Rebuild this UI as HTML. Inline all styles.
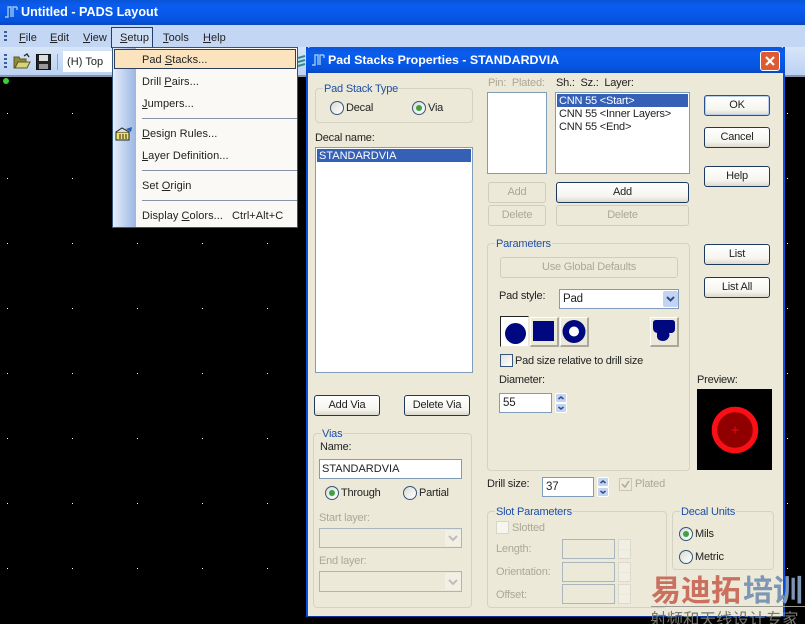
<!DOCTYPE html>
<html><head><meta charset="utf-8"><style>
html,body{margin:0;padding:0}
#r{position:relative;width:805px;height:624px;overflow:hidden;background:#000;font:11px/16px "Liberation Sans","Noto Sans CJK SC",sans-serif;color:#222;letter-spacing:-.2px}
#r div,#r span,#r svg{position:absolute;box-sizing:border-box}
#r span{white-space:nowrap}
u{text-decoration:underline}
.d{color:#aca899}
.g{border:1px solid #d4d2c2;border-radius:4px}
.gt{background:#ece9d8;padding:0 1px}
.btn{border:1px solid #1c3a5e;border-radius:3px;background:linear-gradient(#fff,#f6f5ef 70%,#dcd9cc);text-align:center;line-height:19px}
.dis{border:1px solid #cfcdc0;border-radius:3px;background:#ece9d8;text-align:center;line-height:19px;color:#aca899}
.in{background:#fff;border:1px solid #7f9db9;padding-left:3px;line-height:17px;font-size:11.5px}
.indis{background:#ece9d8;border:1px solid #a9b6bd}
.radio{width:14px;height:14px;border-radius:50%;border:1px solid #33567a;background:linear-gradient(135deg,#dcdcd4,#fff)}
.radio.on:after{content:"";position:absolute;left:3px;top:3px;width:6px;height:6px;border-radius:50%;background:#3fa045}
.m{letter-spacing:.05px}
.up{letter-spacing:0}
.spin{width:12px;background:#c5d5f0;border:1px solid #fff;border-radius:2px}
.tb{background:#ece9d8;border:1px solid;border-color:#fff #aca899 #aca899 #fff;border-width:1px 2px 2px 1px}
.ds{width:13px;height:20px;background:repeating-linear-gradient(#f1efe4 0 9px,#ece9d8 9px 10px);border:1px solid #dcdacd}
</style></head><body><div id="r">
<svg style="left:0;top:0" width="805" height="624"><defs><pattern id="p" x="7" y="48" width="65" height="65" patternUnits="userSpaceOnUse"><rect width="1" height="1" fill="#fff"/></pattern></defs><rect y="76" width="805" height="548" fill="url(#p)"/><circle cx="6" cy="81" r="3" fill="#35d335"/></svg>

<div style="left:0;top:0;width:805px;height:25px;background:linear-gradient(#0a55d8,#0a5df0 25%,#0554e0 80%,#0a46bd)"></div>
<svg style="left:4px;top:4px" width="16" height="15" fill="none" stroke="#9cc6ee" stroke-width="1.4"><path d="M1 13h3V3h3v10M9 13V3h4M13 3v3"/></svg>
<span style="left:21px;top:4px;color:#fff;font:bold 12.6px/16px 'Liberation Sans',sans-serif;letter-spacing:0">Untitled - PADS Layout</span>

<div style="left:0;top:25px;width:805px;height:22px;background:#c3d7f4"></div>
<div style="left:0;top:47px;width:805px;height:28px;background:linear-gradient(#d8e5f9,#bcd2f2)"></div>
<div style="left:0;top:75px;width:805px;height:2px;background:#8a94a8"></div>
<div style="left:4px;top:31px;width:3px;height:11px;background:repeating-linear-gradient(#3a5f9a 0 2px,transparent 2px 4px)"></div>
<div style="left:4px;top:54px;width:3px;height:14px;background:repeating-linear-gradient(#3a5f9a 0 2px,transparent 2px 4px)"></div>
<span class="m" style="left:19px;top:30px"><u>F</u>ile</span>
<span class="m" style="left:50px;top:30px"><u>E</u>dit</span>
<span class="m" style="left:83px;top:30px"><u>V</u>iew</span>
<div style="left:111px;top:27px;width:42px;height:21px;background:#cfe0f6;border:1px solid #1f3f6e;border-bottom:0"></div>
<span class="m" style="left:120px;top:30px"><u>S</u>etup</span>
<span class="m" style="left:163px;top:30px"><u>T</u>ools</span>
<span class="m" style="left:203px;top:30px"><u>H</u>elp</span>

<svg style="left:13px;top:53px" width="18" height="17"><path d="M1 4h5l1 2h6v3H5L2 15H1z" fill="#8f8a3c" stroke="#5c5a20"/><path d="M2 15l3-6h12l-3 6z" fill="#d8d27a" stroke="#5c5a20"/><path d="M11 3l3-2 2 3" fill="none" stroke="#222" stroke-width="1.2"/></svg>
<svg style="left:36px;top:54px" width="15" height="16"><rect x=".5" y=".5" width="14" height="15" fill="#222" stroke="#111"/><rect x="3" y="1" width="9" height="6" fill="#ddd"/><rect x="3" y="10" width="9" height="5" fill="#999"/></svg>
<div style="left:57px;top:54px;width:1px;height:16px;background:#8ea4c4"></div>
<div style="left:63px;top:51px;width:50px;height:21px;background:#fff"></div>
<span class="m" style="left:67px;top:54px;font-size:11px">(H) Top</span>

<div style="left:112px;top:47px;width:186px;height:181px;background:#faf9f5;border:1px solid #35557f"></div>
<div style="left:113px;top:48px;width:23px;height:179px;background:linear-gradient(90deg,#e4edfb,#9bb7e2)"></div>
<div style="left:114px;top:49px;width:182px;height:20px;background:#fbe3bd;border:1px solid #2c3f5c"></div>
<span class="m" style="left:142px;top:52px">Pad <u>S</u>tacks...</span>
<span class="m" style="left:142px;top:74px">Drill <u>P</u>airs...</span>
<span class="m" style="left:142px;top:96px"><u>J</u>umpers...</span>
<div style="left:142px;top:118px;width:155px;height:1px;background:#8a94a8"></div>
<svg style="left:115px;top:126px" width="18" height="15"><path d="M1 6h13v8H1z" fill="#f3e36a" stroke="#222"/><path d="M1 6l6-4 7 4" fill="#ddd" stroke="#222"/><path d="M5 8v5M8 8v5M11 8v5" stroke="#222"/><path d="M11 3l6-2-1 5" fill="#2b5db5"/></svg>
<span class="m" style="left:142px;top:126px"><u>D</u>esign Rules...</span>
<span class="m" style="left:142px;top:148px"><u>L</u>ayer Definition...</span>
<div style="left:142px;top:170px;width:155px;height:1px;background:#8a94a8"></div>
<span class="m" style="left:142px;top:178px">Set <u>O</u>rigin</span>
<div style="left:142px;top:200px;width:155px;height:1px;background:#8a94a8"></div>
<span class="m" style="left:142px;top:208px">Display <u>C</u>olors...</span>
<span class="m" style="left:232px;top:208px">Ctrl+Alt+C</span>

<svg style="left:298px;top:55px" width="8" height="14"><path d="M0 3l7-2M0 7l7-2M0 11l7-2" stroke="#2e8a8a" stroke-width="2"/></svg>

<div style="left:306px;top:47px;width:479px;height:570px;background:#ece9d8;border:2px solid #0d50d8;border-top:0;border-bottom:1px solid #0a3a9a"></div>
<div style="left:306px;top:47px;width:479px;height:26px;background:linear-gradient(#0a55d8,#0a5df0 25%,#0554e0 80%,#0a46bd);border-radius:5px 5px 0 0"></div>
<svg style="left:311px;top:52px" width="16" height="15" fill="none" stroke="#9cc6ee" stroke-width="1.4"><path d="M1 13h3V3h3v10M9 13V3h4M13 3v3"/></svg>
<span style="left:328px;top:53px;color:#fff;font:bold 12.4px/15px 'Liberation Sans',sans-serif;letter-spacing:0">Pad Stacks Properties - STANDARDVIA</span>
<div style="left:760px;top:51px;width:20px;height:20px;background:#dd5a32;border:1px solid #fff;border-radius:3px"></div>
<svg style="left:760px;top:51px" width="20" height="20"><path d="M6 6l8 8M14 6l-8 8" stroke="#fff" stroke-width="2.2"/></svg>

<div class="g" style="left:315px;top:88px;width:158px;height:35px"></div>
<span class="gt" style="left:323px;top:81px;color:#1d4fa8">Pad Stack Type</span>
<div class="radio" style="left:330px;top:101px"></div><span style="left:346px;top:100px">Decal</span>
<div class="radio on" style="left:412px;top:101px"></div><span style="left:428px;top:100px">Via</span>
<span style="left:315px;top:130px">Decal name:</span>
<div style="left:315px;top:147px;width:158px;height:226px;background:#fff;border:1px solid #7f9db9"></div>
<div style="left:317px;top:149px;width:154px;height:13px;background:#3560b5"></div>
<span class="up" style="left:319px;top:149px;color:#fff;line-height:14px">STANDARDVIA</span>

<span class="d" style="left:488px;top:75px">Pin:&nbsp; Plated:</span>
<span style="left:556px;top:75px">Sh.:&nbsp; Sz.:&nbsp; Layer:</span>
<div style="left:487px;top:92px;width:60px;height:82px;background:#fff;border:1px solid #7f9db9"></div>
<div style="left:555px;top:92px;width:135px;height:82px;background:#fff;border:1px solid #7f9db9"></div>
<div style="left:557px;top:94px;width:131px;height:13px;background:#3560b5"></div>
<span style="left:559px;top:94px;color:#fff;line-height:14px">CNN 55 &lt;Start&gt;</span>
<span style="left:559px;top:107px;line-height:14px">CNN 55 &lt;Inner Layers&gt;</span>
<span style="left:559px;top:120px;line-height:14px">CNN 55 &lt;End&gt;</span>

<div class="dis" style="left:488px;top:182px;width:58px;height:21px">Add</div>
<div class="dis" style="left:488px;top:205px;width:58px;height:21px">Delete</div>
<div class="btn" style="left:556px;top:182px;width:133px;height:21px">Add</div>
<div class="dis" style="left:556px;top:205px;width:133px;height:21px">Delete</div>

<div class="btn" style="left:704px;top:95px;width:66px;height:21px;border-color:#27528f;box-shadow:inset 0 0 0 1px #b9cdec">OK</div>
<div class="btn" style="left:704px;top:127px;width:66px;height:21px">Cancel</div>
<div class="btn" style="left:704px;top:166px;width:66px;height:21px">Help</div>
<div class="btn" style="left:704px;top:244px;width:66px;height:21px">List</div>
<div class="btn" style="left:704px;top:277px;width:66px;height:21px">List All</div>

<div class="g" style="left:487px;top:243px;width:203px;height:228px"></div>
<span class="gt" style="left:495px;top:236px;color:#1d4fa8">Parameters</span>
<div class="dis" style="left:500px;top:257px;width:178px;height:21px">Use Global Defaults</div>
<span style="left:499px;top:288px">Pad style:</span>
<div class="in" style="left:559px;top:289px;width:120px;height:20px;padding-top:1px">Pad</div>
<div style="left:663px;top:291px;width:15px;height:16px;background:#c3d3f2;border-radius:2px"></div>
<svg style="left:663px;top:291px" width="15" height="16"><path d="M4 6l3.500 3.500L11 6" fill="none" stroke="#2d4f8c" stroke-width="2"/></svg>

<div style="left:500px;top:316px;width:29px;height:31px;background:#fff;border:1px solid;border-color:#222 #ece9d8 #ece9d8 #222"></div>
<div class="tb" style="left:530px;top:317px;width:29px;height:30px"></div>
<div class="tb" style="left:560px;top:317px;width:29px;height:30px"></div>
<div class="tb" style="left:650px;top:317px;width:29px;height:30px"></div>
<svg style="left:500px;top:316px" width="180" height="31"><circle cx="15.500" cy="17.500" r="10.500" fill="#00087f"/><rect x="33" y="5" width="21" height="20" fill="#00087f"/><circle cx="74" cy="15.500" r="11.500" fill="#00087f"/><circle cx="74" cy="15.500" r="5" fill="#fff"/><path d="M153 7q0-3 3-3h16q3 0 3 3v6q0 3-3 4h-3q1 2 0 4-2 4-6 4-5 0-6-4v-4q-4-1-4-5z" fill="#00087f"/></svg>
<div style="left:500px;top:354px;width:13px;height:13px;background:linear-gradient(135deg,#e4e2d8,#fff);border:1px solid #33567a"></div>
<span style="left:515px;top:353px;letter-spacing:-.25px">Pad size relative to drill size</span>
<span style="left:499px;top:372px">Diameter:</span>
<div class="in" style="left:499px;top:393px;width:53px;height:20px;padding-top:1px">55</div>
<div class="spin" style="left:555px;top:393px;height:10px"></div>
<div class="spin" style="left:555px;top:403px;height:10px"></div>
<svg style="left:555px;top:393px" width="12" height="20"><path d="M3.500 6l2.500-2 2.500 2M3.500 14l2.500 2 2.500-2" fill="none" stroke="#2d4f8c" stroke-width="1.500"/></svg>

<span style="left:697px;top:372px">Preview:</span>
<div style="left:697px;top:389px;width:75px;height:81px;background:#000"></div>
<svg style="left:697px;top:389px" width="75" height="81"><circle cx="38" cy="41" r="20.500" fill="#900000" stroke="#fa0f16" stroke-width="5.500"/><path d="M34.500 41h7M38 37.500v7" stroke="#e01018"/></svg>

<span style="left:487px;top:476px">Drill size:</span>
<div class="in" style="left:542px;top:477px;width:52px;height:20px;padding-top:1px">37</div>
<div class="spin" style="left:597px;top:477px;height:10px"></div>
<div class="spin" style="left:597px;top:487px;height:10px"></div>
<svg style="left:597px;top:477px" width="12" height="20"><path d="M3.500 6l2.500-2 2.500 2M3.500 14l2.500 2 2.500-2" fill="none" stroke="#2d4f8c" stroke-width="1.500"/></svg>
<div style="left:619px;top:478px;width:13px;height:13px;background:#ece9d8;border:1px solid #c9c7ba"></div>
<svg style="left:619px;top:478px" width="13" height="13"><path d="M3 6l3 3 4-6" fill="none" stroke="#aca899" stroke-width="1.500"/></svg>
<span class="d" style="left:635px;top:476px">Plated</span>

<div class="g" style="left:487px;top:511px;width:180px;height:97px"></div>
<span class="gt" style="left:495px;top:504px;color:#1d4fa8">Slot Parameters</span>
<div style="left:496px;top:521px;width:13px;height:13px;background:#f6f5ee;border:1px solid #d8d6c8"></div>
<span class="d" style="left:512px;top:520px">Slotted</span>
<span class="d" style="left:496px;top:541px">Length:</span>
<span class="d" style="left:496px;top:564px">Orientation:</span>
<span class="d" style="left:496px;top:587px">Offset:</span>
<div class="indis" style="left:562px;top:539px;width:53px;height:20px"></div>
<div class="indis" style="left:562px;top:562px;width:53px;height:20px"></div>
<div class="indis" style="left:562px;top:584px;width:53px;height:20px"></div>
<div class="ds" style="left:618px;top:539px"></div>
<div class="ds" style="left:618px;top:562px"></div>
<div class="ds" style="left:618px;top:584px"></div>

<div class="g" style="left:672px;top:511px;width:102px;height:59px"></div>
<span class="gt" style="left:680px;top:504px;color:#1d4fa8">Decal Units</span>
<div class="radio on" style="left:679px;top:527px"></div><span style="left:695px;top:526px">Mils</span>
<div class="radio" style="left:679px;top:550px"></div><span style="left:695px;top:549px">Metric</span>

<div class="g" style="left:313px;top:433px;width:159px;height:175px"></div>
<span class="gt" style="left:321px;top:426px;color:#1d4fa8">Vias</span>
<span style="left:320px;top:439px">Name:</span>
<div class="in up" style="left:319px;top:459px;width:143px;height:20px;padding-left:2px;padding-top:1px;font-size:11px">STANDARDVIA</div>
<div class="radio on" style="left:325px;top:486px"></div><span style="left:341px;top:485px">Through</span>
<div class="radio" style="left:403px;top:486px"></div><span style="left:419px;top:485px">Partial</span>
<span class="d" style="left:319px;top:510px">Start layer:</span>
<div class="indis" style="left:319px;top:528px;width:143px;height:20px"></div>
<div style="left:445px;top:530px;width:16px;height:16px;background:#f2f0e6"></div>
<svg style="left:445px;top:530px" width="16" height="16"><path d="M4 6l4 4 4-4" fill="none" stroke="#c0beb0" stroke-width="2"/></svg>
<span class="d" style="left:319px;top:553px">End layer:</span>
<div class="indis" style="left:319px;top:571px;width:143px;height:21px"></div>
<div style="left:445px;top:573px;width:16px;height:17px;background:#f2f0e6"></div>
<svg style="left:445px;top:573px" width="16" height="17"><path d="M4 7l4 4 4-4" fill="none" stroke="#c0beb0" stroke-width="2"/></svg>

<div class="btn" style="left:314px;top:395px;width:66px;height:21px">Add Via</div>
<div class="btn" style="left:404px;top:395px;width:66px;height:21px">Delete Via</div>

<span style="left:651px;top:570px;font:bold 30px/36px 'Noto Sans CJK SC',sans-serif;color:#c9705f;letter-spacing:0">易迪拓</span>
<span style="left:743px;top:570px;font:bold 30px/36px 'Noto Sans CJK SC',sans-serif;color:#7c96b4;letter-spacing:0">培训</span>
<div style="left:651px;top:606px;width:154px;height:1px;background:#9a9a90"></div>
<span style="left:650px;top:608px;font:16.5px/20px 'Noto Sans CJK SC',sans-serif;color:#77776e;letter-spacing:0">射频和天线设计专家</span>
</div></body></html>
